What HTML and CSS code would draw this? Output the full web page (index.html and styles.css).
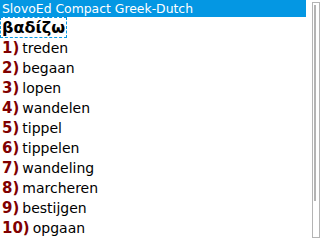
FILE: index.html
```html
<!DOCTYPE html>
<html lang="en">
  <head>
    <meta charset="UTF-8" />
    <title>SlovoEd Compact Greek-Dutch</title>
    <link rel="stylesheet" href="styles.css">
  </head>
  <body>
    <div class="screen">
      <div class="main">
        <div class="title-bar">SlovoEd Compact Greek-Dutch</div>
        <div class="headword">βαδίζω</div>
        <ol class="translations">
          <li><span class="num">1)</span>treden</li>
          <li><span class="num">2)</span>begaan</li>
          <li><span class="num">3)</span>lopen</li>
          <li><span class="num">4)</span>wandelen</li>
          <li><span class="num">5)</span>tippel</li>
          <li><span class="num">6)</span>tippelen</li>
          <li><span class="num">7)</span>wandeling</li>
          <li><span class="num">8)</span>marcheren</li>
          <li><span class="num">9)</span>bestijgen</li>
          <li><span class="num">10)</span>opgaan</li>
        </ol>
      </div>
      <div class="scrollbar">
        <div class="thumb"></div>
      </div>
    </div>
  </body>
</html>
```

FILE: styles.css
```css
body {
  margin: 0;
  background-color: #ffffff;
  font-family: "DejaVu Sans", sans-serif;
}
.screen {
  display: flex;
  width: 320px;
  height: 240px;
  overflow: hidden;
}
.main {
  width: 306px;
}
.title-bar {
  height: 17px;
  line-height: 17px;
  padding-left: 2px;
  background-color: #0497e3;
  color: #ffffff;
  font-size: 12.4px;
  white-space: nowrap;
}
.headword {
  display: inline-block;
  padding: 0 1px;
  border: 1px dashed #0497e3;
  font-size: 16px;
  font-weight: bold;
  line-height: 19px;
  height: 19px;
  color: #000000;
}
.translations {
  list-style: none;
  margin: 0;
  padding: 0 0 0 2px;
}
.translations li {
  height: 20px;
  line-height: 20px;
  font-size: 14px;
  color: #000000;
}
.num {
  margin-right: 3px;
  font-size: 15px;
  font-weight: bold;
  color: #800000;
}
.scrollbar {
  margin: 2px 0 0 6px;
  width: 4px;
  height: 232px;
  border: 1px solid #b4b4b4;
  padding: 2px 1px 0;
}
.thumb {
  width: 2px;
  height: 196px;
  background-color: #b4b4b4;
}
```
